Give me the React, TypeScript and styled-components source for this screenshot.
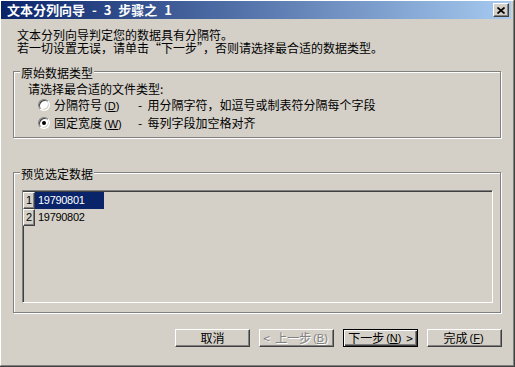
import React from "react";
import styled, { createGlobalStyle } from "styled-components";

const GlobalStyle = createGlobalStyle`
  html, body {
    margin: 0;
    padding: 0;
    background: #d4d0c8;
  }
  body {
    font-family: "Noto Sans CJK SC", "Noto Sans", sans-serif;
    font-size: 12px;
    color: #000;
  }
`;

const Window = styled.div`
  width: 515px;
  height: 367px;
  box-sizing: border-box;
  background: #d4d0c8;
  border-right: 1px solid #404040;
  border-bottom: 1px solid #404040;
  overflow: hidden;
`;

const Frame = styled.div`
  height: 100%;
  box-sizing: border-box;
  border-top: 1px solid #fff;
  border-left: 1px solid #fff;
  border-right: 1px solid #808080;
  border-bottom: 1px solid #808080;
  padding-right: 2px;
  display: flex;
  flex-direction: column;
`;

const TitleBar = styled.div`
  height: 18px;
  flex-shrink: 0;
  display: flex;
  align-items: center;
  justify-content: space-between;
  padding: 0 2px 0 6px;
  background: linear-gradient(to right, #0a246a, #a6caf0);
`;

const Title = styled.span`
  color: #fff;
  font-size: 13px;
  font-weight: bold;
  line-height: 18px;
  word-spacing: 4px;
  white-space: pre;
`;

const CloseButton = styled.div`
  width: 16px;
  height: 14px;
  box-sizing: border-box;
  background: #d4d0c8;
  border: 1px solid;
  border-color: #fff #404040 #404040 #fff;
  box-shadow: inset -1px -1px 0 #808080;
  display: flex;
  align-items: center;
  justify-content: center;
`;

const Body = styled.div`
  display: flex;
  flex-direction: column;
  padding-left: 12px;
`;

const Intro = styled.div`
  margin: 9px 0 0 4px;
  line-height: 13px;
`;

const GroupBox = styled.div<{ $top: number; $height: number }>`
  position: relative;
  margin-top: ${p => p.$top}px;
  width: 488px;
  height: ${p => p.$height}px;
  box-sizing: border-box;
  border: 1px solid #808080;
  box-shadow: inset 1px 1px 0 #fff, 1px 1px 0 #fff;
`;

const Legend = styled.span`
  position: absolute;
  top: -6px;
  left: 6px;
  padding: 0 1px;
  line-height: 14px;
  background: #d4d0c8;
`;

const TypeBody = styled.div`
  padding: 10px 0 0 14px;
`;

const Prompt = styled.div`
  line-height: 14px;
`;

const RadioRow = styled.div`
  height: 18px;
  margin-left: 10px;
  display: flex;
  align-items: center;
`;

const Radio = styled.span<{ $checked?: boolean }>`
  position: relative;
  width: 12px;
  height: 12px;
  box-sizing: border-box;
  border-radius: 50%;
  background: #fff;
  border: 1px solid;
  border-color: #808080 #fff #fff #808080;
  box-shadow: inset 1px 1px 0 #404040, inset -1px -1px 0 #d4d0c8;
  margin-right: 4px;
  &::after {
    content: "";
    display: ${p => (p.$checked ? "block" : "none")};
    position: absolute;
    left: 3px;
    top: 3px;
    width: 4px;
    height: 4px;
    border-radius: 50%;
    background: #000;
  }
`;

const OptionLabel = styled.span`
  width: 84px;
  line-height: 18px;
  white-space: nowrap;
`;

const OptionDesc = styled.span`
  line-height: 18px;
  white-space: pre;
`;

const PreviewBody = styled.div`
  padding: 17px 0 0 8px;
`;

const PreviewBox = styled.div`
  width: 471px;
  height: 113px;
  box-sizing: border-box;
  padding: 1px 0 0 0;
  border: 1px solid;
  border-color: #808080 #fff #fff #808080;
  box-shadow: inset 1px 1px 0 #404040, inset -1px -1px 0 #d4d0c8;
`;

const DataRow = styled.div`
  display: flex;
  height: 17px;
`;

const RowNumber = styled.span`
  width: 12px;
  height: 17px;
  box-sizing: border-box;
  border: 1px solid;
  border-color: #fff #404040 #404040 #fff;
  box-shadow: inset -1px -1px 0 #808080;
  font-family: "Liberation Sans", Arial, sans-serif;
  font-size: 11px;
  line-height: 15px;
  text-align: center;
`;

const DataCell = styled.span<{ $selected?: boolean }>`
  width: 69px;
  box-sizing: border-box;
  padding-left: 3px;
  font-family: "Liberation Sans", Arial, sans-serif;
  font-size: 11px;
  letter-spacing: -0.3px;
  line-height: 17px;
  background: ${p => (p.$selected ? "#0a246a" : "transparent")};
  color: ${p => (p.$selected ? "#fff" : "#000")};
`;

const ButtonRow = styled.div`
  width: 489px;
  margin-top: 16px;
  display: flex;
  justify-content: flex-end;
  gap: 9px;
`;

const Button = styled.div<{ $default?: boolean; $disabled?: boolean }>`
  width: 75px;
  height: 18px;
  box-sizing: border-box;
  display: flex;
  align-items: center;
  justify-content: center;
  line-height: 16px;
  white-space: pre;
  border: 1px solid;
  border-color: ${p => (p.$default ? "#000" : "#fff #404040 #404040 #fff")};
  box-shadow: ${p =>
    p.$default
      ? "inset 1px 1px 0 #fff, inset -1px -1px 0 #404040, inset -2px -2px 0 #808080"
      : "inset -1px -1px 0 #808080"};
  color: ${p => (p.$disabled ? "#808080" : "#000")};
  text-shadow: ${p => (p.$disabled ? "1px 1px 0 #fff" : "none")};
`;

const Key = styled.span`
  font-family: "Liberation Sans", Arial, sans-serif;
  font-size: 11px;
  margin: 0 2px;
  u {
    text-decoration: underline;
  }
`;

const rows = [
  { n: 1, value: "19790801", selected: true },
  { n: 2, value: "19790802", selected: false },
];

export default function App() {
  return (
    <>
      <GlobalStyle />
      <Window>
        <Frame>
          <TitleBar>
            <Title>文本分列向导 - 3 步骤之 1</Title>
            <CloseButton>
              <svg width="8" height="7" viewBox="0 0 8 7">
                <path d="M0.5 0.5L7.5 6.5M7.5 0.5L0.5 6.5" stroke="#000" strokeWidth="1.7" />
              </svg>
            </CloseButton>
          </TitleBar>
          <Body>
            <Intro>
              文本分列向导判定您的数据具有分隔符。
              <br />
              若一切设置无误，请单击“下一步”，否则请选择最合适的数据类型。
            </Intro>

            <GroupBox $top={17} $height={67}>
              <Legend>原始数据类型</Legend>
              <TypeBody>
                <Prompt>请选择最合适的文件类型:</Prompt>
                <RadioRow>
                  <Radio />
                  <OptionLabel>
                    分隔符号<Key>(<u>D</u>)</Key>
                  </OptionLabel>
                  <OptionDesc>-  用分隔字符，如逗号或制表符分隔每个字段</OptionDesc>
                </RadioRow>
                <RadioRow>
                  <Radio $checked />
                  <OptionLabel>
                    固定宽度<Key>(<u>W</u>)</Key>
                  </OptionLabel>
                  <OptionDesc>-  每列字段加空格对齐</OptionDesc>
                </RadioRow>
              </TypeBody>
            </GroupBox>

            <GroupBox $top={34} $height={141}>
              <Legend>预览选定数据</Legend>
              <PreviewBody>
                <PreviewBox>
                  {rows.map(r => (
                    <DataRow key={r.n}>
                      <RowNumber>{r.n}</RowNumber>
                      <DataCell $selected={r.selected}>{r.value}</DataCell>
                    </DataRow>
                  ))}
                </PreviewBox>
              </PreviewBody>
            </GroupBox>

            <ButtonRow>
              <Button>取消</Button>
              <Button $disabled>
                {"<  "}上一步<Key>(<u>B</u>)</Key>
              </Button>
              <Button $default>
                下一步<Key>(<u>N</u>)</Key>
                {" >"}
              </Button>
              <Button>
                完成<Key>(<u>F</u>)</Key>
              </Button>
            </ButtonRow>
          </Body>
        </Frame>
      </Window>
    </>
  );
}
